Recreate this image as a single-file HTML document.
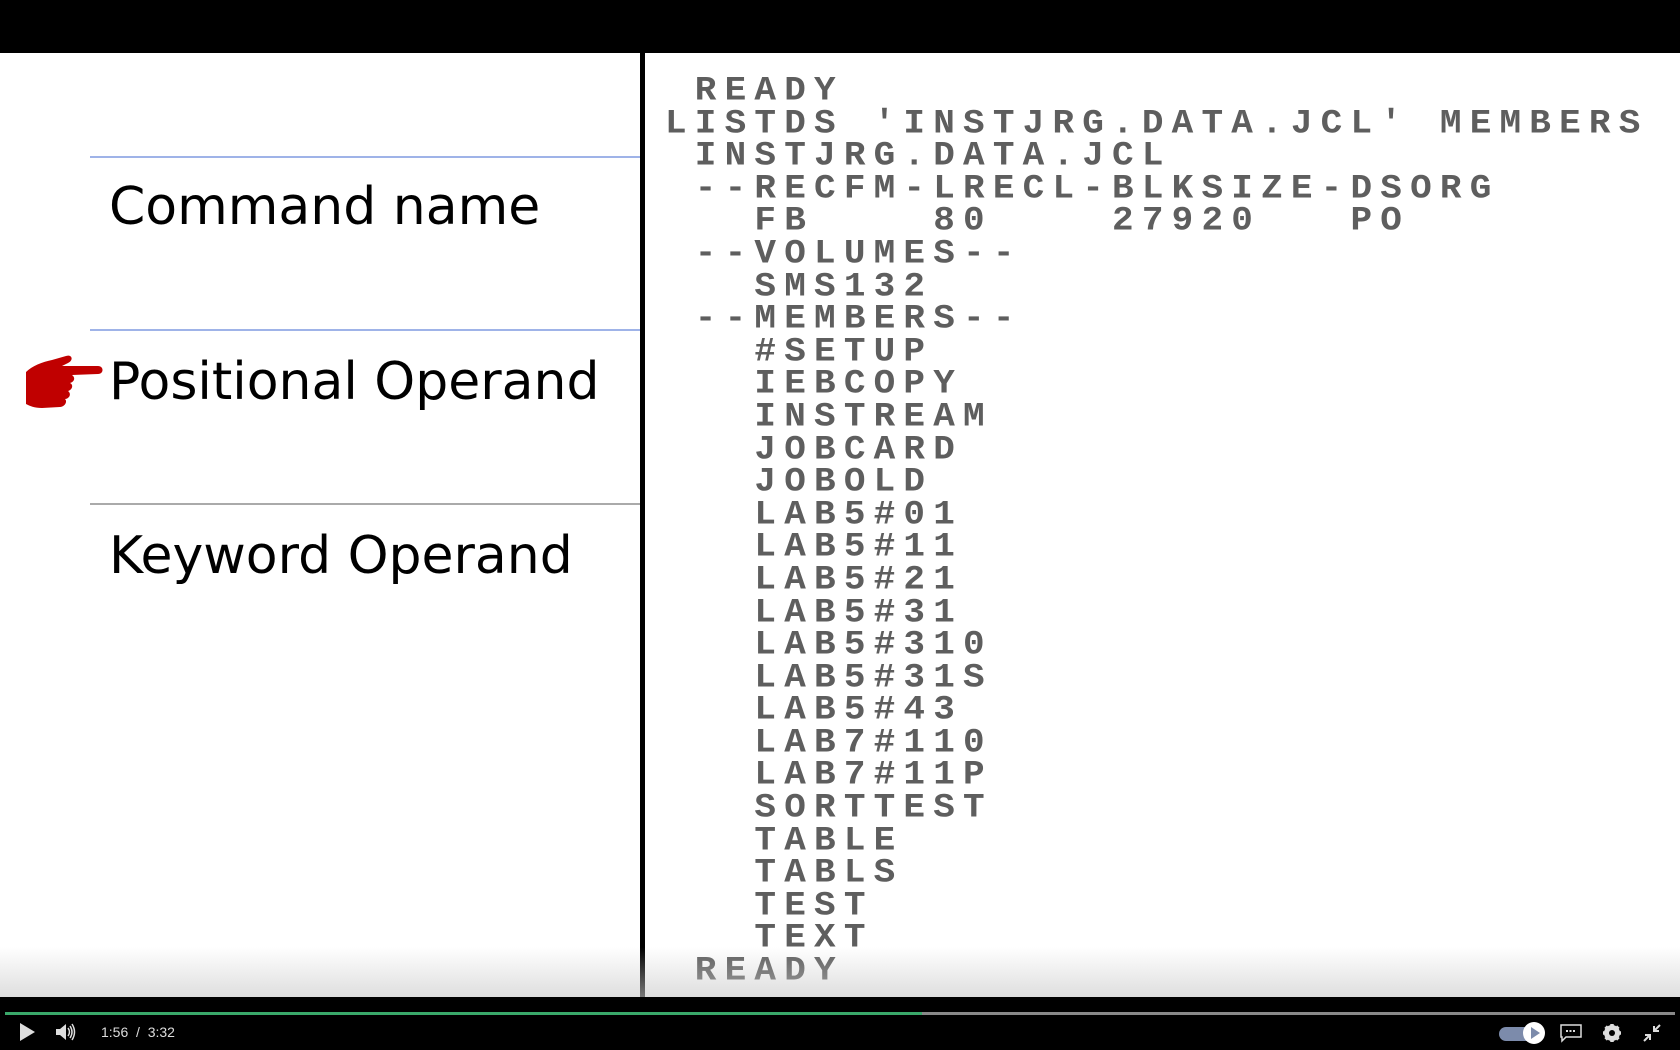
<!DOCTYPE html>
<html><head><meta charset="utf-8"><style>
html,body{margin:0;padding:0;width:1680px;height:1050px;overflow:hidden;background:#000;}
#screen{position:absolute;left:0;top:53px;width:1680px;height:944px;background:#fff;overflow:hidden;}
#fade{position:absolute;left:0;right:0;bottom:0;height:50px;background:linear-gradient(rgba(200,200,200,0),rgba(200,200,200,0.6));z-index:5}
.hl{position:absolute;left:90px;width:550px;height:2px;}
.lbl{position:absolute;left:109px;font-family:"DejaVu Sans","Liberation Sans",sans-serif;font-size:52px;color:#000;letter-spacing:0px;}
#div{position:absolute;left:640px;top:0;width:5px;height:944px;background:#000;}
#term{position:absolute;left:665px;top:0;font-family:"Liberation Mono",monospace;font-weight:bold;font-size:36px;letter-spacing:8.2px;color:#5e5e5e;white-space:pre;line-height:32.6px;padding-top:22px;}
#term div{transform:scaleY(0.95);}
#bar{position:absolute;left:0;top:997px;width:1680px;height:53px;background:#000;}
.t{position:absolute;font-family:"Liberation Sans",sans-serif;font-size:14px;color:#ddd;}
</style></head><body>
<div id="screen">
<div class="hl" style="top:103px;background:#9fb3e8"></div>
<div class="hl" style="top:276px;background:#9fb3e8"></div>
<div class="hl" style="top:450px;background:#aaa"></div>
<div class="lbl" style="top:124px">Command name</div>
<div class="lbl" style="top:299px">Positional Operand</div>
<div class="lbl" style="top:473px">Keyword Operand</div>
<svg style="position:absolute;left:22px;top:301px" width="82" height="58" viewBox="0 0 82 58">
<path d="M4 18 C10 12 20 8 30 6 L44 2 C50 0 52 6 46 9 L40 12 L76 12 C82 12 82 20 76 20 L50 21 C54 24 52 28 48 29 C52 31 50 36 46 37 C50 40 47 45 43 45 C46 48 42 53 38 53 L20 54 C12 54 8 52 4 50 Z" fill="#c00000"/>
</svg>
<div id="div"></div>
<div id="term"><div> READY</div><div>LISTDS 'INSTJRG.DATA.JCL' MEMBERS</div><div> INSTJRG.DATA.JCL</div><div> --RECFM-LRECL-BLKSIZE-DSORG</div><div>   FB    80    27920   PO</div><div> --VOLUMES--</div><div>   SMS132</div><div> --MEMBERS--</div><div>   #SETUP</div><div>   IEBCOPY</div><div>   INSTREAM</div><div>   JOBCARD</div><div>   JOBOLD</div><div>   LAB5#01</div><div>   LAB5#11</div><div>   LAB5#21</div><div>   LAB5#31</div><div>   LAB5#310</div><div>   LAB5#31S</div><div>   LAB5#43</div><div>   LAB7#110</div><div>   LAB7#11P</div><div>   SORTTEST</div><div>   TABLE</div><div>   TABLS</div><div>   TEST</div><div>   TEXT</div><div> READY</div></div>
<div id="fade"></div>
</div>
<div id="bar">
<div style="position:absolute;left:5px;top:15px;width:917px;height:3px;background:#3aa86a"></div>
<div style="position:absolute;left:922px;top:15px;width:753px;height:3px;background:#888"></div>
<svg style="position:absolute;left:18px;top:25px" width="20" height="20" viewBox="0 0 20 20"><path d="M2 1 L17 10 L2 19 Z" fill="#ddd"/></svg>
<svg style="position:absolute;left:55px;top:25px" width="22" height="20" viewBox="0 0 22 20"><path d="M1 7 H5 L11 2 V18 L5 13 H1 Z" fill="#ddd"/><path d="M13 6 Q16 10 13 14 M15 4 Q19 10 15 16 M17 2 Q22 10 17 18" stroke="#ddd" stroke-width="1.5" fill="none"/></svg>
<div class="t" style="left:101px;top:27px">1:56&nbsp;&nbsp;/&nbsp;&nbsp;3:32</div>
<div style="position:absolute;left:1499px;top:30px;width:36px;height:14px;border-radius:7px;background:#7c8bab"></div>
<div style="position:absolute;left:1523px;top:25px;width:22px;height:22px;border-radius:11px;background:#fff"></div>
<svg style="position:absolute;left:1529px;top:29px" width="12" height="14"><path d="M2 1 L11 7 L2 13 Z" fill="#7c8bab"/></svg>
<svg style="position:absolute;left:1560px;top:26px" width="22" height="20" viewBox="0 0 22 20"><path d="M1 2 H21 V14 H6 L2 18 V14 H1 Z" fill="none" stroke="#ddd" stroke-width="1.5"/><path d="M6 8 H16" stroke="#ddd" stroke-width="2" stroke-dasharray="2 1.5"/></svg>
<svg style="position:absolute;left:1602px;top:26px" width="20" height="20" viewBox="0 0 20 20"><circle cx="10" cy="10" r="6" fill="none" stroke="#ddd" stroke-width="4"/><g stroke="#ddd" stroke-width="3.5"><path d="M10 1V19M1 10H19M3.6 3.6L16.4 16.4M16.4 3.6L3.6 16.4"/></g><circle cx="10" cy="10" r="3" fill="#000"/></svg>
<svg style="position:absolute;left:1642px;top:26px" width="20" height="20" viewBox="0 0 20 20"><path d="M18 2 L12 8 M12 3 V8 H17 M2 18 L8 12 M3 12 H8 V17" stroke="#ddd" stroke-width="2" fill="none"/></svg>
</div>
</body></html>
